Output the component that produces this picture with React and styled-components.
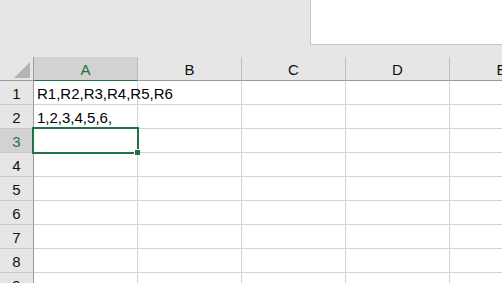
import React from "react";
import styled, { createGlobalStyle } from "styled-components";

const Global = createGlobalStyle`
  html, body { margin: 0; padding: 0; background: #ffffff; overflow: hidden; }
  #root { width: 502px; height: 283px; }
`;

const Page = styled.div`
  width: 502px;
  height: 283px;
  overflow: hidden;
  background: #e6e6e6;
  font-family: "Liberation Sans", Arial, sans-serif;
  display: flex;
  flex-direction: column;
`;

const TopBar = styled.div`
  height: 57px;
  flex: none;
  display: flex;
  justify-content: flex-end;
  align-items: flex-start;
`;

const FormulaPanel = styled.div`
  width: 192px;
  height: 45px;
  box-sizing: border-box;
  background: #ffffff;
  border-left: 1px solid #c6c6c6;
  border-bottom: 1px solid #c6c6c6;
`;

const Grid = styled.div`
  position: relative;
  display: grid;
  grid-template-columns: 34px repeat(5, 104px);
  grid-auto-rows: 24px;
  background: #ffffff;
  flex: none;
  width: 554px;
`;

const Corner = styled.div`
  box-sizing: border-box;
  background: #e6e6e6;
  border-right: 1px solid #9b9b9b;
  border-bottom: 1px solid #9b9b9b;
  display: flex;
  align-items: flex-end;
  justify-content: flex-end;
  padding: 0 3px 2px 0;
`;

const ColHeader = styled.div`
  box-sizing: border-box;
  background: ${(p) => (p.$active ? "#d2d2d2" : "#e6e6e6")};
  color: ${(p) => (p.$active ? "#217346" : "#111111")};
  border-right: 1px solid #bdbdbd;
  border-bottom: ${(p) => (p.$active ? "1px solid #217346" : "1px solid #9b9b9b")};
  font-size: 15px;
  line-height: 23px;
  padding-top: 1px;
  text-align: center;
`;

const RowHeader = styled.div`
  box-sizing: border-box;
  background: ${(p) => (p.$active ? "#d2d2d2" : "#e6e6e6")};
  color: ${(p) => (p.$active ? "#217346" : "#111111")};
  border-right: 1px solid ${(p) => (p.$active ? "#217346" : "#9b9b9b")};
  border-bottom: 1px solid #c8c8c8;
  font-size: 15px;
  line-height: 23px;
  padding-top: 1px;
  text-align: center;
`;

const Cell = styled.div`
  box-sizing: border-box;
  border-right: 1px solid #d4d4d4;
  border-bottom: 1px solid #d4d4d4;
  font-size: 15px;
  line-height: 23px;
  padding: 1px 0 0 3px;
  color: #000000;
  white-space: nowrap;
  overflow: visible;
  position: relative;
  z-index: ${(p) => (p.$overflow ? 1 : 0)};
`;

const Selection = styled.div`
  position: absolute;
  left: 32px;
  top: 70px;
  width: 107px;
  height: 27px;
  box-sizing: border-box;
  border: 2px solid #217346;
  pointer-events: none;
  z-index: 2;
`;

const FillHandle = styled.div`
  position: absolute;
  right: -3px;
  bottom: -3px;
  width: 5px;
  height: 5px;
  background: #217346;
  box-shadow: -1px -1px 0 #ffffff;
`;

const cols = ["A", "B", "C", "D", "E"];
const data = {
  1: { A: "R1,R2,R3,R4,R5,R6" },
  2: { A: "1,2,3,4,5,6," },
};
const rows = [1, 2, 3, 4, 5, 6, 7, 8, 9];

export default function App() {
  return (
    <>
      <Global />
      <Page>
        <TopBar>
          <FormulaPanel />
        </TopBar>
        <Grid>
          <Corner>
            <svg width="16" height="16" viewBox="0 0 16 16">
              <polygon points="16,0 16,16 0,16" fill="#b4b4b4" />
            </svg>
          </Corner>
          {cols.map((c) => (
            <ColHeader key={c} $active={c === "A"}>
              {c}
            </ColHeader>
          ))}
          {rows.map((r) => (
            <React.Fragment key={r}>
              <RowHeader $active={r === 3}>{r}</RowHeader>
              {cols.map((c) => {
                const v = data[r] && data[r][c];
                return (
                  <Cell key={c} $overflow={!!v}>
                    {v || ""}
                  </Cell>
                );
              })}
            </React.Fragment>
          ))}
          <Selection>
            <FillHandle />
          </Selection>
        </Grid>
      </Page>
    </>
  );
}
